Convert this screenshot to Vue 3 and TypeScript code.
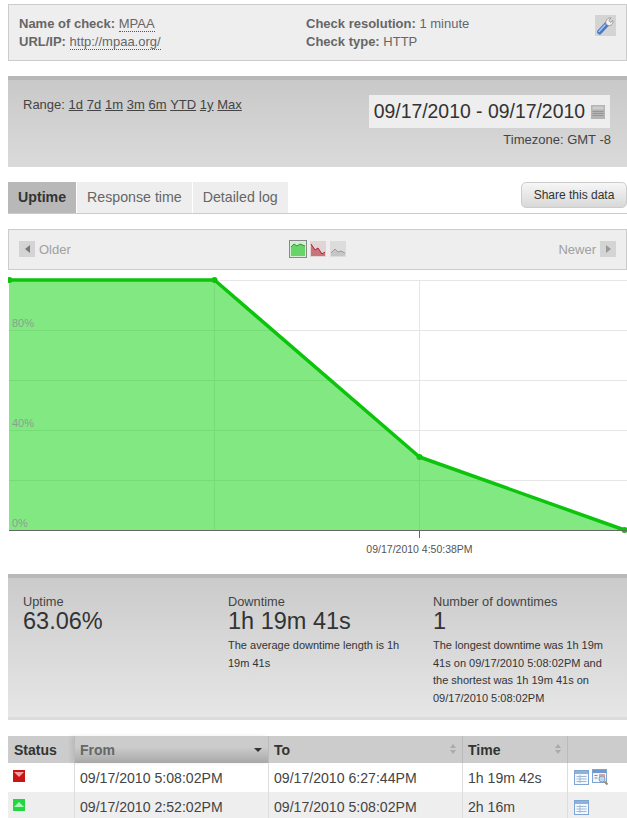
<script setup lang="ts">
const ranges = ['1d', '7d', '1m', '3m', '6m', 'YTD', '1y', 'Max']
const tabs = [
  { label: 'Uptime', active: true },
  { label: 'Response time', active: false },
  { label: 'Detailed log', active: false },
]
const rows = [
  { up: false, from: '09/17/2010 5:08:02PM', to: '09/17/2010 6:27:44PM', time: '1h 19m 42s', inspect: true },
  { up: true, from: '09/17/2010 2:52:02PM', to: '09/17/2010 5:08:02PM', time: '2h 16m', inspect: false },
]
</script>

<template>
  <div class="page">
    <section class="info">
      <div class="info-col first">
        <div><b>Name of check:</b> <a>MPAA</a></div>
        <div><b>URL/IP:</b> <a>http://mpaa.org/</a></div>
      </div>
      <div class="info-col">
        <div><b>Check resolution:</b> 1 minute</div>
        <div><b>Check type:</b> HTTP</div>
      </div>
      <div class="wrench">
        <svg width="21" height="21" viewBox="0 0 21 21">
          <rect width="21" height="21" fill="#d4d4d4" />
          <path d="M4.5 17 L12 9" stroke="#4a78c8" stroke-width="5" stroke-linecap="round" />
          <path d="M4 16.5 L10 10" stroke="#a9c6f0" stroke-width="1.5" stroke-linecap="round" />
          <path d="M11 9 C10 6 12.5 2.5 16 3 L14 5.5 L15.5 7.5 L18 5.5 C18.5 8.5 16 11.5 13 10.5 Z" fill="#f2f2f2" stroke="#8a8a8a" stroke-width="0.8" />
        </svg>
      </div>
    </section>

    <section class="range gray-panel">
      <div class="range-links">
        <span>Range:</span>
        <a v-for="r in ranges" :key="r">{{ r }}</a>
      </div>
      <div class="range-right">
        <div class="date-box">
          09/17/2010 - 09/17/2010
          <svg width="14" height="14" viewBox="0 0 14 14">
            <rect width="14" height="14" fill="#b4b4b4" />
            <rect x="1.5" y="1.5" width="11" height="3" fill="#cdcdcd" />
            <path d="M1.5 6.5H12.5M1.5 8.5H12.5M1.5 10.5H12.5" stroke="#979797" stroke-width="1" />
          </svg>
        </div>
        <div class="timezone">Timezone: GMT -8</div>
      </div>
    </section>

    <nav class="tabs">
      <div v-for="t in tabs" :key="t.label" class="tab" :class="{ active: t.active }">{{ t.label }}</div>
      <button class="share">Share this data</button>
    </nav>

    <section class="controls">
      <div class="pager">
        <span class="arrow"><i class="tri left"></i></span>
        Older
      </div>
      <div class="chart-types">
        <svg class="selected" width="16" height="16" viewBox="0 0 16 16">
          <rect width="16" height="16" fill="#d6eed6" />
          <path d="M1 15V6L4 3L7 5L10 3L15 5V15Z" fill="#66d466" />
          <path d="M1 6L4 3L7 5L10 3L15 5" fill="none" stroke="#2f9a2f" />
        </svg>
        <svg width="16" height="16" viewBox="0 0 16 16">
          <rect width="16" height="16" fill="#e0d4d4" />
          <path d="M1 15V3L5 9L8 7L12 13L15 11V15Z" fill="#c9737c" />
          <path d="M1 3L5 9L8 7L12 13L15 11" fill="none" stroke="#b8202c" />
        </svg>
        <svg width="16" height="16" viewBox="0 0 16 16">
          <rect width="16" height="16" fill="#dcdcdc" />
          <path d="M1 15V12L5 8L8 11L11 10L15 12V15Z" fill="#c6c6c6" />
          <path d="M1 12L5 8L8 11L11 10L15 12" fill="none" stroke="#9a9a9a" />
        </svg>
      </div>
      <div class="pager right">
        Newer
        <span class="arrow"><i class="tri"></i></span>
      </div>
    </section>

    <svg class="chart" width="619" height="286" viewBox="0 0 619 286">
      <defs>
        <clipPath id="area-clip">
          <path d="M1 0H206.5L411.5 177L616.5 250H1Z" />
        </clipPath>
      </defs>
      <g stroke="#e6e6e6" stroke-width="1" shape-rendering="crispEdges">
        <path d="M1 0.5H619M1 50.5H619M1 100.5H619M1 150.5H619M1 200.5H619" />
        <path d="M206.5 0V250M411.5 0V250" />
      </g>
      <path d="M1 0H206.5L411.5 177L616.5 250H1Z" fill="#82e882" />
      <g clip-path="url(#area-clip)" stroke="#76dc76" stroke-width="1" shape-rendering="crispEdges">
        <path d="M1 50.5H619M1 100.5H619M1 150.5H619M1 200.5H619" />
        <path d="M206.5 0V250M411.5 0V250" />
      </g>
      <path d="M1 0H206.5L411.5 177L616.5 250" fill="none" stroke="#0cc40c" stroke-width="3.5" stroke-linejoin="round" />
      <circle cx="1.5" cy="0" r="3" fill="#0cc40c" />
      <circle cx="206.5" cy="0" r="3" fill="#0cc40c" />
      <circle cx="411.5" cy="177" r="3" fill="#0cc40c" />
      <circle cx="616.5" cy="250" r="3" fill="#0cc40c" />
      <g class="y-label">
        <text x="4" y="47">80%</text>
        <text x="4" y="147">40%</text>
        <text x="4" y="247">0%</text>
      </g>
      <path d="M1 250.5H619M411.5 250V258" stroke="#666" stroke-width="1" shape-rendering="crispEdges" />
      <text class="x-label" x="411.5" y="273" text-anchor="middle">09/17/2010 4:50:38PM</text>
    </svg>

    <section class="stats gray-panel">
      <div class="stat">
        <div class="stat-title">Uptime</div>
        <div class="stat-value">63.06%</div>
      </div>
      <div class="stat">
        <div class="stat-title">Downtime</div>
        <div class="stat-value">1h 19m 41s</div>
        <p>The average downtime length is 1h 19m 41s</p>
      </div>
      <div class="stat">
        <div class="stat-title">Number of downtimes</div>
        <div class="stat-value">1</div>
        <p>The longest downtime was 1h 19m 41s on 09/17/2010 5:08:02PM and the shortest was 1h 19m 41s on 09/17/2010 5:08:02PM</p>
      </div>
    </section>

    <table class="log">
      <thead>
        <tr>
          <th class="c-status">Status</th>
          <th class="c-from sorted">From<i class="sort-down"></i></th>
          <th class="c-to">To<span class="sort"><i></i><i></i></span></th>
          <th class="c-time">Time<span class="sort"><i></i><i></i></span></th>
          <th class="c-actions"></th>
        </tr>
      </thead>
      <tbody>
        <tr v-for="row in rows" :key="row.from">
          <td class="status">
            <span class="badge" :class="row.up ? 'up' : 'down'"><i></i></span>
          </td>
          <td>{{ row.from }}</td>
          <td>{{ row.to }}</td>
          <td>{{ row.time }}</td>
          <td class="actions">
            <svg width="15" height="15" viewBox="0 0 15 15">
              <rect x="0.5" y="0.5" width="14" height="14" fill="#f4f8fd" stroke="#7fa4d2" />
              <rect x="1" y="1" width="13" height="3" fill="#8fb2dc" />
              <path d="M2.5 6.5H12.5M2.5 9H12.5M2.5 11.5H12.5M6 5V13" stroke="#9db8d8" stroke-width="1" />
            </svg>
            <svg v-if="row.inspect" width="17" height="17" viewBox="0 0 17 17">
              <rect x="0.5" y="0.5" width="14" height="13" fill="#f2f6fb" stroke="#7fa4d2" />
              <rect x="1" y="1" width="13" height="3" fill="#6f97cc" />
              <path d="M2.5 6.5H5.5M2.5 9H5.5" stroke="#7b8ea8" />
              <rect x="7" y="5" width="6" height="3" fill="#dba0a0" />
              <circle cx="10" cy="10" r="3" fill="#bcd6ee" stroke="#8aa0b8" />
              <path d="M12.5 12.5L15.5 15.5" stroke="#a08a70" stroke-width="2" />
            </svg>
          </td>
        </tr>
      </tbody>
    </table>
  </div>
</template>

<style>
html, body {
  margin: 0;
  background: #fff;
  overflow: hidden;
}
</style>

<style scoped>
.page {
  width: 619px;
  height: 818px;
  margin-left: 8px;
  padding-top: 4px;
  box-sizing: border-box;
  overflow: hidden;
  font-family: "Liberation Sans", Arial, sans-serif;
  color: #666;
}

.info {
  position: relative;
  height: 57px;
  box-sizing: border-box;
  display: flex;
  padding: 10px 10px;
  border: 1px solid #ccc;
  background: #eee;
  font-size: 13px;
  line-height: 18px;
}
.info-col.first {
  width: 287px;
}
.info a {
  border-bottom: 1px dotted #555;
}
.wrench {
  margin-left: auto;
  height: 21px;
}

.gray-panel {
  background: linear-gradient(#c9c9c9, #dadada);
  border-top: 4px solid #b8b8b8;
}

.range {
  margin-top: 15px;
  height: 91px;
  box-sizing: border-box;
  display: flex;
  justify-content: space-between;
  padding: 17px 17px 0 15px;
  color: #444;
  font-size: 13px;
}
.range-links {
  display: flex;
  gap: 3.7px;
  align-items: flex-start;
}
.range-links a {
  text-decoration: underline;
}
.range-right {
  display: flex;
  flex-direction: column;
  align-items: flex-end;
}
.date-box {
  display: flex;
  align-items: center;
  gap: 6px;
  height: 33px;
  padding: 0 5px;
  margin-top: -2px;
  background: #eee;
  color: #333;
  font-size: 19.4px;
}
.timezone {
  margin: 4px -1px 0 0;
  line-height: 16px;
}

.tabs {
  display: flex;
  align-items: flex-start;
  gap: 1px;
  height: 32px;
  margin-top: 15px;
  box-sizing: border-box;
  border-bottom: 1px solid #ccc;
}
.tab {
  height: 31px;
  line-height: 30px;
  padding: 0 10px;
  background: #eee;
  font-size: 14.2px;
}
.tab.active {
  background: #b8b8b8;
  color: #333;
  font-weight: bold;
}
.share {
  margin-left: auto;
  height: 26px;
  width: 106px;
  border: 1px solid #ccc;
  border-radius: 5px;
  background: linear-gradient(#f6f6f6, #d8d8d8);
  color: #333;
  font: 12px "Liberation Sans", Arial, sans-serif;
  padding: 0;
}

.controls {
  display: flex;
  align-items: center;
  justify-content: space-between;
  height: 41px;
  margin-top: 15px;
  box-sizing: border-box;
  padding: 0 10px 1px;
  border: 1px solid #ccc;
  background: #eee;
  color: #a0a0a0;
  font-size: 13px;
}
.pager {
  display: flex;
  align-items: center;
  gap: 4px;
  width: 120px;
}
.pager.right {
  justify-content: flex-end;
}
.arrow {
  width: 16px;
  height: 16px;
  display: flex;
  align-items: center;
  justify-content: center;
  background: #d4d4d4;
}
.tri {
  width: 0;
  height: 0;
  border-top: 4px solid transparent;
  border-bottom: 4px solid transparent;
  border-left: 5px solid #999;
}
.tri.left {
  border-left: 0;
  border-right: 5px solid #777;
}
.chart-types {
  display: flex;
  align-items: center;
  gap: 4px;
}
.chart-types .selected {
  outline: 1px solid #888;
}

.chart {
  display: block;
  margin-top: 10px;
  overflow: visible;
}
.y-label text {
  fill: #8f9f8f;
  font-size: 11px;
}
.x-label {
  fill: #555;
  font-size: 10.5px;
}

.stats {
  margin-top: 8px;
  height: 146px;
  box-sizing: border-box;
  display: grid;
  grid-template-columns: 205px 205px 1fr;
  padding: 16px 15px 0;
  color: #444;
  background: linear-gradient(#cbcbcb, #e6e6e6);
  border-bottom: 3px solid #dcdcdc;
}
.stat-title {
  font-size: 12.8px;
  line-height: 15px;
}
.stat-value {
  font-size: 23.5px;
  line-height: 24px;
  color: #333;
}
.stat p {
  margin: 4px 0 0;
  width: 178px;
  font-size: 11px;
  line-height: 17.5px;
  color: #333;
}

.log {
  width: 100%;
  margin-top: 16px;
  border-collapse: separate;
  border-spacing: 0;
  table-layout: fixed;
  font-size: 14.1px;
}
.log th {
  height: 27px;
  padding: 0 5px;
  box-sizing: border-box;
  background: #ccc;
  color: #333;
  font-size: 14px;
  text-align: left;
  position: relative;
  border-left: 1px solid #bbb;
}
.log th.c-status {
  border-left: 0;
  padding-left: 6px;
}
.log th.sorted {
  background: linear-gradient(#ccc 40%, #a8a8a8);
  box-shadow: -3px 0 4px rgba(0, 0, 0, 0.08);
  color: #666;
}
.c-status { width: 66px; }
.c-from { width: 194px; }
.c-to { width: 194px; }
.c-time { width: 105px; }
.log td {
  height: 29px;
  padding: 0 5px;
  color: #444;
  border-left: 1px solid #ddd;
  box-sizing: border-box;
  white-space: nowrap;
}
.log td.status {
  border-left: 0;
  padding-left: 5px;
}
.log td.actions {
  padding-left: 6px;
}
.log tbody tr:nth-child(2) td {
  background: #eee;
}
.sort-down {
  position: absolute;
  right: 6px;
  top: 12px;
  border-left: 4px solid transparent;
  border-right: 4px solid transparent;
  border-top: 4px solid #333;
}
.sort {
  position: absolute;
  right: 6px;
  top: 8px;
  display: flex;
  flex-direction: column;
  gap: 2px;
}
.sort i {
  width: 0;
  height: 0;
  border-left: 3px solid transparent;
  border-right: 3px solid transparent;
  border-bottom: 4px solid #aaa;
}
.sort i + i {
  border-bottom: 0;
  border-top: 4px solid #aaa;
}
.badge {
  display: block;
  width: 12px;
  height: 12px;
  position: relative;
  margin-top: -3px;
}
.badge.down { background: #c81414; }
.badge.up { background: #22d83f; }
.badge i {
  position: absolute;
  left: 1px;
  border-left: 5px solid transparent;
  border-right: 5px solid transparent;
}
.badge.down i {
  top: 2px;
  border-top: 5px solid #f2a0a0;
}
.badge.up i {
  top: 3px;
  border-bottom: 5px solid #b4f5c0;
}
.actions svg {
  margin-right: 3px;
  vertical-align: middle;
}
</style>
